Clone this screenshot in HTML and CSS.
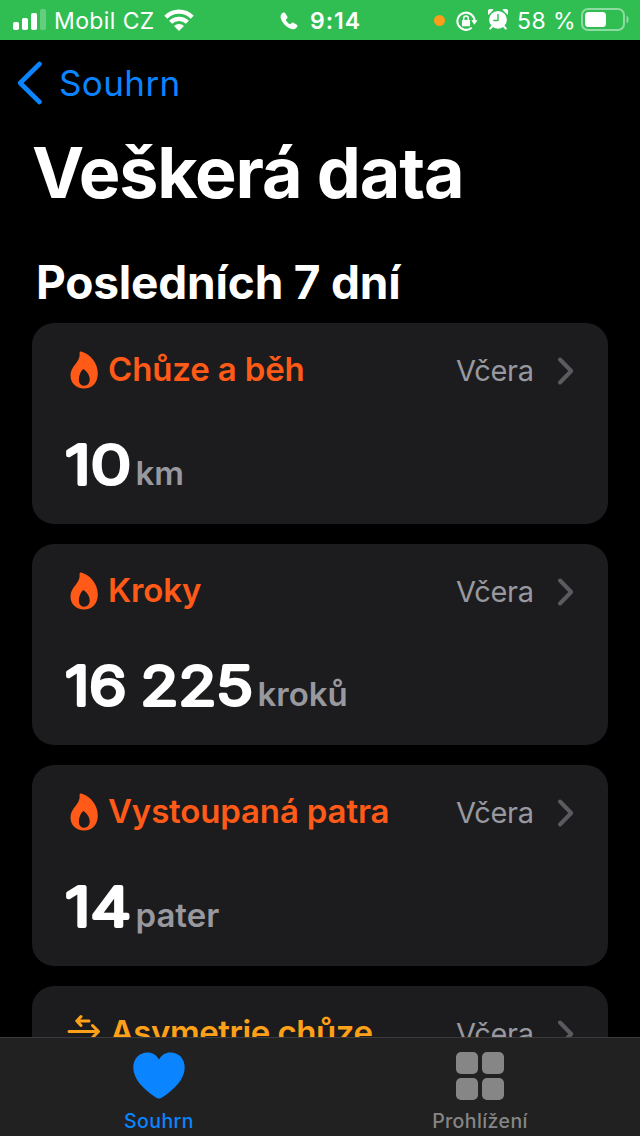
FILE: index.html
```html
<!DOCTYPE html>
<html lang="cs">
<head>
<meta charset="utf-8">
<title>Veškerá data</title>
<link rel="stylesheet" href="styles.css">
</head>
<body>
<svg class="defs" width="0" height="0" aria-hidden="true">
  <symbol id="flame" viewBox="0 0 28 38"><path fill="currentColor" fill-rule="evenodd" d="M9.800 1C10.200.5 11 .5 11.900.8C20.500 3.600 27.800 12 27.800 22.500C27.800 31.500 22.300 37.500 14 37.500C6 37.500.5 32 .5 24.500C.5 14.800 10.600 11.500 9.600 2.600C9.500 1.900 9.500 1.400 9.800 1ZM12.700 18.600C13.400 18 14.100 18.200 14.800 18.900C17.700 21.500 19.700 24.700 19.700 28.300C19.700 32.300 17.400 34.700 14.200 34.700C10.900 34.700 8.900 32.300 8.900 28.700C8.900 24.500 10.600 20.600 12.700 18.600Z"/></symbol>
  <symbol id="chevron" viewBox="0 0 18 30"><path fill="none" stroke="currentColor" stroke-width="4" stroke-linecap="round" stroke-linejoin="round" d="M3 3.500 14.200 15 3 26.500"/></symbol>
</svg>
<div class="screen">
  <header class="status">
    <svg class="signal" viewBox="0 0 34 24"><g fill="#fff"><rect x="0" y="14" width="6" height="8" rx="1.800"/><rect x="9" y="10" width="6" height="12" rx="1.800"/><rect x="18" y="5" width="6" height="17" rx="1.800"/><rect x="27" y="1" width="6" height="21" rx="1.800" opacity=".25"/></g></svg>
    <span class="carrier">Mobil CZ</span>
    <svg class="wifi" viewBox="0 0 30 24"><g fill="none" stroke="#fff" stroke-width="4.300"><path d="M1.800 9.200a18.600 18.600 0 0 1 26.400 0"/><path d="M6.600 14.300a11.800 11.800 0 0 1 16.800 0"/></g><path fill="#fff" d="M15 23 10 18a7 7 0 0 1 10 0Z"/></svg>
    <svg class="phone" viewBox="0 0 18 18"><path fill="#fff" d="M3.400.6C4.300.2 4.900.6 5.400 1.400L7.300 4.500C7.800 5.400 7.500 6 6.900 6.600L6 7.400C5.700 7.700 5.800 8 6 8.400C6.900 9.900 8.200 11.200 9.700 12.100C10.100 12.300 10.400 12.300 10.700 12L11.500 11.100C12.100 10.500 12.800 10.400 13.500 10.800L16.800 12.800C17.600 13.300 17.700 14 17.200 14.800C16.200 16.600 14.400 17.700 12.300 17.200C6.500 15.800 1.700 10.700.6 5.600C.2 3.500 1.500 1.500 3.400.6Z"/></svg>
    <span class="clock">9:14</span>
    <span class="mic"></span>
    <svg class="lock" viewBox="0 0 22 20"><path fill="none" stroke="#fff" stroke-width="2" d="M15.700 16.700A8.600 8.600 0 1 1 18.600 10"/><path fill="#fff" d="M15.300 9.200h6.200l-3.100 4.600ZM6 9h8v6.200H6Z"/><path fill="none" stroke="#fff" stroke-width="1.500" d="M7.700 9V7.400a2.300 2.300 0 0 1 4.600 0V9"/></svg>
    <svg class="alarm" viewBox="0 0 20 21"><g fill="#fff"><circle cx="10" cy="10.800" r="8.900"/><path d="M.5 5.800A3.500 3.500 0 0 1 5.500.8ZM19.500 5.800A3.500 3.500 0 0 0 14.500.8Z"/></g><path stroke="#fff" stroke-width="2" stroke-linecap="round" d="M4 17.500 2.200 19.600M16 17.500l1.800 2.100"/><path fill="none" stroke="#30be53" stroke-width="1.400" stroke-linecap="round" stroke-linejoin="round" d="M10 5.500V11.500H5.800"/></svg>
    <span class="percent">58 %</span>
    <svg class="battery" viewBox="0 0 50 24"><rect x="1" y="1" width="42" height="21" rx="6" fill="none" stroke="#fff" stroke-opacity=".45" stroke-width="2"/><rect x="4" y="4" width="21" height="15" rx="3.500" fill="#fff"/><path fill="#fff" fill-opacity=".45" d="M45.500 7.500c2.800 1.200 2.800 6.800 0 8Z"/></svg>
  </header>
  <nav class="back">
    <svg class="back-icon" viewBox="0 0 26 44"><path fill="none" stroke="#0a84ff" stroke-width="4.600" stroke-linecap="round" stroke-linejoin="round" d="M22.500 3 3.200 22 22.500 41"/></svg>
    <span class="back-label">Souhrn</span>
  </nav>
  <main class="content">
    <h1 class="title">Veškerá data</h1>
    <h2 class="section">Posledních 7 dní</h2>
    <div class="cards">
      <section class="card">
        <div class="card-head"><svg class="flame"><use href="#flame"/></svg><span class="name">Chůze a běh</span><span class="when">Včera</span><svg class="chevron"><use href="#chevron"/></svg></div>
        <div class="reading"><svg class="number" width="66" height="60"><text x="0" y="48.500" textLength="66" lengthAdjust="spacingAndGlyphs">10</text></svg><span class="unit">km</span></div>
      </section>
      <section class="card">
        <div class="card-head"><svg class="flame"><use href="#flame"/></svg><span class="name">Kroky</span><span class="when">Včera</span><svg class="chevron"><use href="#chevron"/></svg></div>
        <div class="reading"><svg class="number" width="188" height="60"><text x="0" y="48.500" textLength="188" lengthAdjust="spacingAndGlyphs" word-spacing="-3">16 225</text></svg><span class="unit">kroků</span></div>
      </section>
      <section class="card">
        <div class="card-head"><svg class="flame"><use href="#flame"/></svg><span class="name">Vystoupaná patra</span><span class="when">Včera</span><svg class="chevron"><use href="#chevron"/></svg></div>
        <div class="reading"><svg class="number" width="66" height="60"><text x="0" y="48.500" textLength="66" lengthAdjust="spacingAndGlyphs">14</text></svg><span class="unit">pater</span></div>
      </section>
      <section class="card card-walk">
        <div class="card-head"><svg class="arrows" viewBox="0 0 34 30"><g fill="none" stroke="currentColor" stroke-width="3" stroke-linecap="round" stroke-linejoin="round"><path d="M22 7H10M14 2.500 9.800 7 14 11.500M2 17.500H31M25.500 11.500 31.500 17.500 25.500 23.500"/></g></svg><span class="name name-walk">Asymetrie chůze</span><span class="when">Včera</span><svg class="chevron"><use href="#chevron"/></svg></div>
      </section>
    </div>
  </main>
  <footer class="tabs">
    <div class="tab tab-active"><svg class="heart" viewBox="0 0 52 47"><path fill="currentColor" d="M26 7.500C28.500 3 32.700.5 37.500.5C46 .5 51.700 7 51.700 15.500C51.700 27.500 41 37.500 29.500 45.200C27 46.900 25 46.900 22.500 45.200C11 37.500.3 27.500.3 15.500C.3 7 6 .5 14.500.5C19.300.5 23.500 3 26 7.500Z"/></svg><span class="tab-label tab-label-summary">Souhrn</span></div>
    <div class="tab"><div class="grid"><i></i><i></i><i></i><i></i></div><span class="tab-label">Prohlížení</span></div>
  </footer>
</div>
</body>
</html>
```

FILE: styles.css
```css
* { box-sizing: border-box; }
body { margin: 0; background: #000; font-family: Inter, "Liberation Sans", sans-serif; }
svg { display: block; flex: none; }
.defs { display: none; }
.screen { width: 640px; height: 1136px; display: flex; flex-direction: column; overflow: hidden; background: #000; color: #fff; }
span { white-space: nowrap; }

.status { flex: none; height: 40px; display: flex; align-items: center; background: #30be53; padding-left: 13px; font-size: 23px; line-height: 30px; padding-top: 1px; }
.signal { width: 34px; height: 24px; margin-top: -2px; }
.carrier { width: 101px; margin-left: 7px; letter-spacing: .4px; }
.wifi { width: 30px; height: 24px; margin-left: 9px; margin-top: -2px; }
.phone { width: 18px; height: 18px; margin-left: 86px; margin-top: 1px; }
.clock { width: 52px; margin-left: 12px; font-weight: 600; letter-spacing: 1px; }
.mic { width: 11px; height: 11px; border-radius: 50%; background: #f99d1b; margin-left: 72px; }
.lock { width: 22px; height: 20px; margin-left: 11px; }
.alarm { width: 20px; height: 21px; margin-left: 10px; margin-top: -2px; }
.percent { width: 60px; margin-left: 9px; letter-spacing: .4px; }
.battery { width: 50px; height: 24px; margin-left: 4px; margin-top: -1px; }

.back { flex: none; height: 86px; display: flex; align-items: center; padding-left: 17px; color: #0a84ff; }
.back-icon { width: 26px; height: 44px; }
.back-label { margin-left: 16px; font-size: 35px; line-height: 44px; letter-spacing: .4px; }

.content { flex: 1; min-height: 0; overflow: hidden; padding: 2px 32px 0; }
.title { margin: 0; height: 90px; font-size: 70px; line-height: 90px; font-weight: 700; letter-spacing: -1.2px; white-space: nowrap; }
.section { margin: 34px 0 0 4px; height: 60px; font-size: 46px; line-height: 60px; font-weight: 700; letter-spacing: -.2px; white-space: nowrap; }
.cards { display: flex; flex-direction: column; gap: 20px; margin-top: 11px; }
.card { height: 201px; flex: none; border-radius: 22px; background: #1c1c1e; padding: 24px 33px 0; }
.card-head { height: 44px; display: flex; align-items: center; color: #ff5a17; }
.flame { width: 28px; height: 38px; margin-left: 5px; margin-top: 1px; }
.name { flex: 1; margin-left: 10px; font-size: 33px; line-height: 44px; font-weight: 600; letter-spacing: -.15px; }
.when { width: 78px; margin: 4px 1px 0 -1px; color: #98989f; font-size: 29px; line-height: 44px; letter-spacing: -.3px; }
.chevron { width: 18px; height: 30px; color: #5b5b5f; margin: 3px 0 0 22px; }
.reading { display: flex; height: 60px; margin-top: 44px; align-items: flex-start; }
.number { overflow: visible; }
.number text { font-size: 54px; font-weight: 300; fill: #fff; stroke: #fff; stroke-width: 4px; stroke-linejoin: round; }
.unit { color: #98989f; font-size: 33px; line-height: 44px; font-weight: 600; margin: 16px 0 0 4.5px; }
.card-walk .card-head { color: #ffa118; }
.arrows { width: 34px; height: 30px; margin: -6px 0 0 2px; }
.name-walk { margin-left: 9px; letter-spacing: -.45px; }

.tabs { flex: none; height: 99px; display: flex; background: #212121; border-top: 1px solid #3b3b3e; }
.tab { width: 320px; display: flex; flex-direction: column; align-items: center; padding-top: 14px; color: #868686; }
.tab-active { color: #0a84ff; padding-right: 2px; }
.heart { width: 52px; height: 47px; }
.grid { display: grid; grid-template-columns: 22px 22px; grid-auto-rows: 22px; gap: 4px; }
.grid i { background: #868686; border-radius: 5px; }
.tab-label { font-size: 19.5px; line-height: 24px; font-weight: 500; margin-top: 9px; letter-spacing: .4px; }
.tab-label-summary { margin-top: 10px; }
```
